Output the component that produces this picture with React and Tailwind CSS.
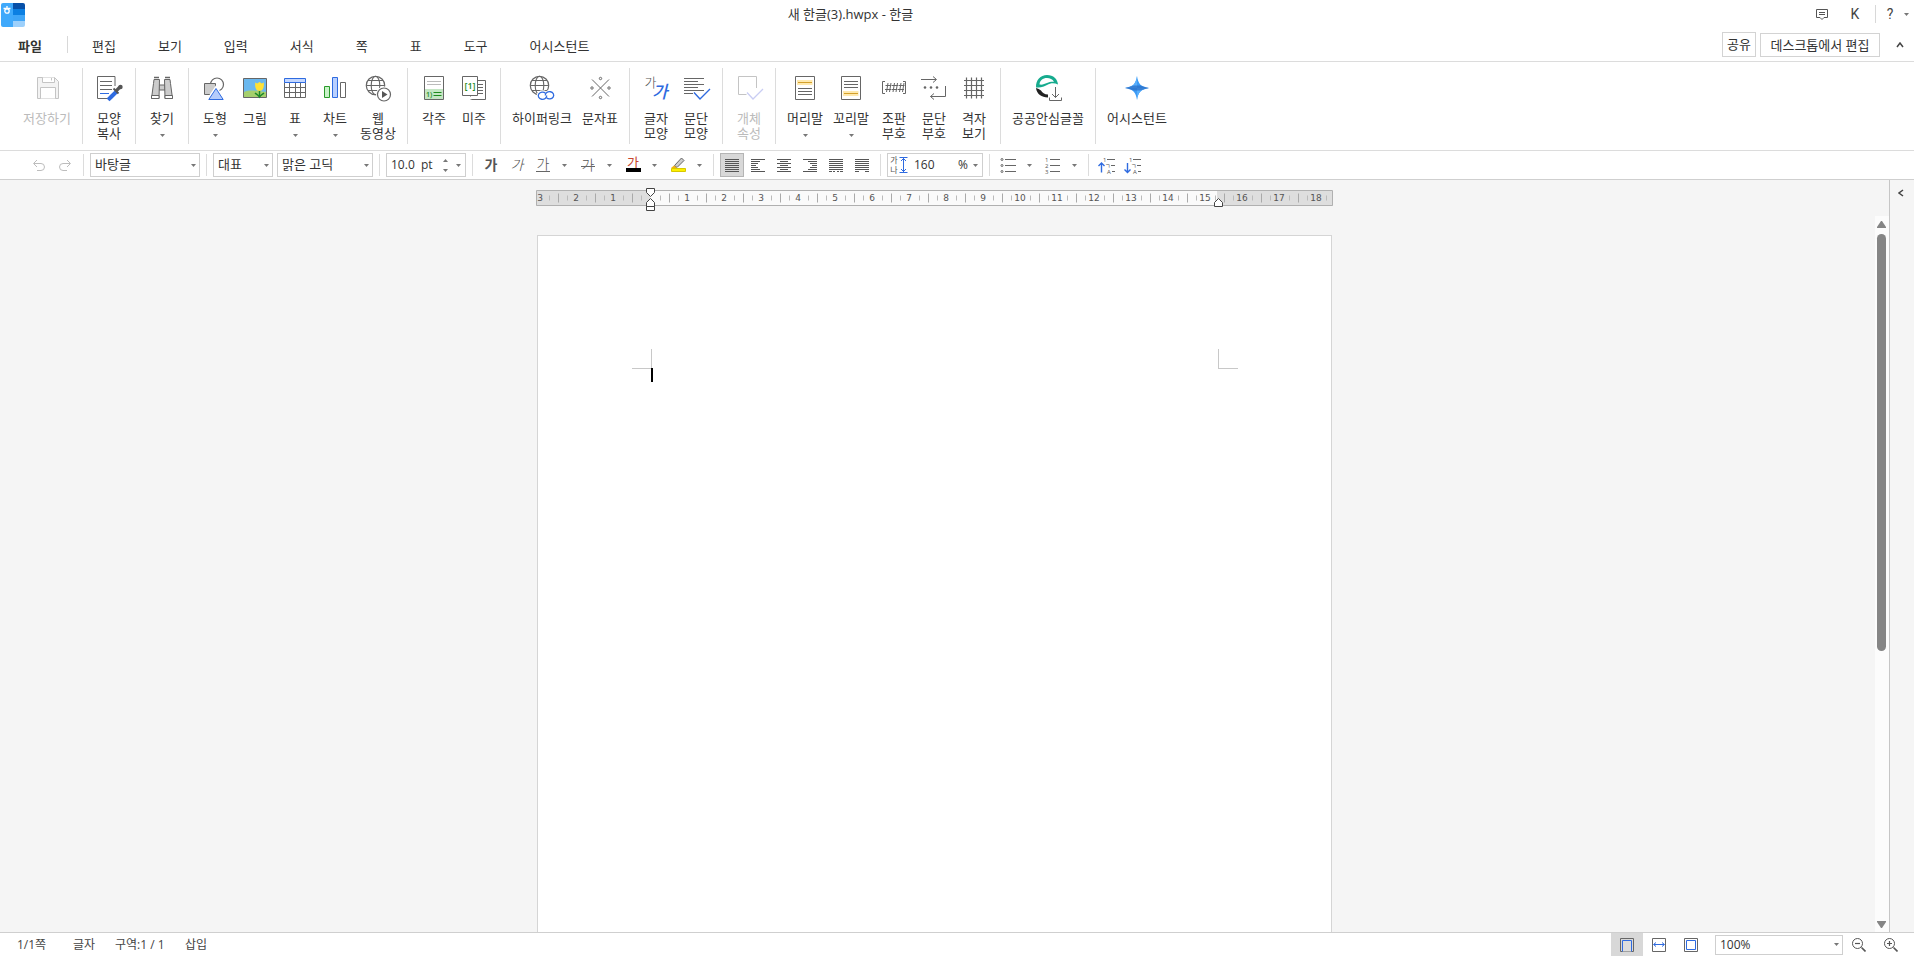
import React from "react";

const G = "#666";
const B = "#2f6be0";

function Icon({ children, size = "size-8" }) {
  return (
    <svg
      className={`${size} shrink-0 overflow-visible`}
      viewBox={size === "size-8" ? "0 0 32 32" : "0 0 24 24"}
      fill="none"
      stroke={G}
      aria-hidden="true"
    >
      {children}
    </svg>
  );
}

function Caret({ className = "" }) {
  return (
    <svg className={`h-[3px] w-[5px] shrink-0 ${className}`} viewBox="0 0 5 3" fill="#777" aria-hidden="true">
      <path d="M0 0h5L2.500 3z" />
    </svg>
  );
}

const Globe = () => (
  <>
    <circle cx="13.5" cy="13.5" r="9.2" strokeWidth="1.2" />
    <ellipse cx="13.5" cy="13.5" rx="4.3" ry="9.2" strokeWidth="1.1" />
    <path d="M4.500 13.500h18M6 8.500h15M6 18.500h15" strokeWidth="1.1" />
  </>
);

const icons = {
  save: (
    <Icon>
      <g stroke="#c4c4c4">
        <path d="M6.500 5.500h17l4 4v17h-21z" fill="#f3f3f3" />
        <path d="M11.500 5.500v5h12v-5" fill="#fff" />
        <path d="M20.500 6v2.500" />
        <path d="M9.500 26.500v-11h15v11" fill="#fff" />
      </g>
    </Icon>
  ),
  brush: (
    <Icon>
      <path d="M14 26.500H4.500v-22h17.500V14" fill="#fff" />
      <path d="M7 9.500h12M7 13.500h12M7 17.500h12" />
      <path d="M7 21.500h9" stroke={B} />
      <path d="M22.500 20.500L18 25L16.500 26.500" stroke={B} strokeWidth="4" strokeLinecap="square" />
      <path d="M20.500 16.500l5 5" strokeWidth="1.800" stroke="#555" />
      <path d="M23 19l4-4" strokeWidth="3.200" stroke="#555" />
      <circle cx="27.500" cy="15" r="2.200" fill="#555" stroke="none" />
    </Icon>
  ),
  find: (
    <Icon>
      <path d="M13 13h6v5h-6z" fill="#ccc" />
      <path d="M8 7.500h5.500l-.5 19H5.500l2-15z" fill="#ccc" />
      <path d="M24 7.500h-5.500l.5 19h7.500l-2-15z" fill="#ccc" />
      <path d="M5.500 23.500h7.500v3H5.500zM19 23.500h7.500v3H19z" fill="#fff" />
      <path d="M8 5.500h5M19 5.500h5" strokeWidth="1.500" />
    </Icon>
  ),
  shape: (
    <Icon>
      <circle cx="18" cy="12.500" r="6.500" strokeWidth="1.200" />
      <path d="M5.500 11.500h11v11h-11z" fill="#ccc" />
      <path d="M17 15L8 28.500h18z" fill="#fff" stroke="#fff" strokeWidth="2" />
      <path d="M17 16.500L9.800 27.500h14.400z" fill="#b5ccfb" stroke={B} />
    </Icon>
  ),
  picture: (
    <Icon>
      <path d="M4.500 6.500h23v19h-23z" fill="#6bb8ee" />
      <path d="M5 20c6-3 14-1 22 0v5H5z" fill="#a5cf6d" stroke="none" />
      <path d="M20.500 18v7" stroke="#1c8a2a" strokeWidth="1.400" />
      <path d="M16 21c1.500 1.500 3.500 2 4.500 4c1-2 3-2.500 4.500-4" stroke="#1c8a2a" strokeWidth="1.400" />
      <path d="M16.200 10.500l2 1l2.300-1.500l2.300 1.500l2-1c.5 5-1 8.500-4.300 8.500s-4.800-3.500-4.300-8.500z" fill="#ffe135" stroke="none" />
    </Icon>
  ),
  table: (
    <Icon>
      <path d="M5.500 10.500h21v15h-21z" fill="#fff" />
      <path d="M5 15.500h22M5 20.500h22M10.500 10v16M16.500 10v16M21.500 10v16" />
      <path d="M5.500 6.500h21v4h-21z" fill="#c3d7ff" stroke={B} />
    </Icon>
  ),
  chart: (
    <Icon>
      <path d="M5.500 14.500h5v11h-5z" fill="#c9f2c9" stroke="#2a9a2a" />
      <path d="M13.500 5.500h5v20h-5z" fill="#b9d0ff" stroke={B} />
      <path d="M21.500 10.500h5v15h-5z" fill="#fff" />
    </Icon>
  ),
  web: (
    <Icon>
      <Globe />
      <circle cx="22" cy="22.500" r="8" fill="#fff" stroke="none" />
      <circle cx="22" cy="22.500" r="6.500" fill="#fff" strokeWidth="1.200" />
      <path d="M20 19l5.500 3.500L20 26z" fill="#555" stroke="none" />
    </Icon>
  ),
  footnote: (
    <Icon>
      <path d="M6.500 4.500h19v23h-19z" fill="#fff" />
      <path d="M7 17h18v10H7z" fill="#c4e6c4" stroke="none" />
      <path d="M9 9.500h14M9 12.500h14" stroke="#bbb" />
      <text x="8" y="24.500" fontSize="7" fill="#1d8a1d" stroke="none" fontWeight="600">1)</text>
      <path d="M15.500 20.500h8M15.500 23.500h8" stroke="#1d8a1d" />
    </Icon>
  ),
  endnote: (
    <Icon>
      <path d="M12.500 8.500h15v19h-15z" fill="#fff" />
      <path d="M20 12.500h5M20 15.500h5M20 18.500h5M20 21.500h5" />
      <path d="M12.500 24.500v3" stroke="#fff" strokeWidth="2" />
      <path d="M4.500 4.500h15v19h-15z" fill="#fff" />
      <text x="12" y="17" fontSize="9" fill="#1d8a1d" stroke="none" fontWeight="600" textAnchor="middle">[1]</text>
    </Icon>
  ),
  link: (
    <Icon>
      <Globe />
      <g stroke="#fff" strokeWidth="3.500" fill="#fff">
        <ellipse cx="16.500" cy="23.500" rx="4.200" ry="3.600" />
        <ellipse cx="23.500" cy="23.500" rx="4.200" ry="3.600" />
      </g>
      <g stroke={B} strokeWidth="1.300">
        <path d="M19.500 21.200A4.200 3.600 0 1 0 20.700 23.500" />
        <path d="M20.500 25.800A4.200 3.600 0 1 0 19.300 23.500" />
      </g>
    </Icon>
  ),
  symbols: (
    <Icon>
      <path d="M8 7.500l17 17M25 7.500l-17 17" />
      <circle cx="16.500" cy="6.500" r="1.200" />
      <circle cx="16.500" cy="25.500" r="1.200" />
      <circle cx="8" cy="16" r="1.200" />
      <circle cx="25" cy="16" r="1.200" />
    </Icon>
  ),
  charShape: (
    <Icon>
      <text x="4.500" y="14.500" fontSize="13" fill="#555" stroke="none" fontWeight="300">가</text>
      <text x="12" y="26" fontSize="17" fill={B} stroke="none" fontWeight="500" fontStyle="italic">가</text>
    </Icon>
  ),
  paraShape: (
    <Icon>
      <path d="M4 6.500h20M4 9.500h14M4 12.500h20M4 15.500h14M4 18.500h20M4 21.500h9" />
      <path d="M14 20.500l6 6.500l10-10" stroke={B} strokeWidth="1.400" />
    </Icon>
  ),
  object: (
    <Icon>
      <path d="M23.500 16V4.500h-18v18h8" stroke="#c4c4c4" />
      <path d="M14 20.500l6 6.500l10-10" stroke="#c9cdf3" strokeWidth="1.300" />
    </Icon>
  ),
  header: (
    <Icon>
      <path d="M6.500 4.500h19v23h-19z" fill="#fff" />
      <path d="M8 8h15.500v5H8z" fill="#ffe9ae" stroke="none" />
      <path d="M9 10.500h14" stroke="#d3a02c" />
      <path d="M9 16.500h14M9 19.500h14M9 22.500h14" />
    </Icon>
  ),
  footer: (
    <Icon>
      <path d="M6.500 4.500h19v23h-19z" fill="#fff" />
      <path d="M8 19h15.500v5H8z" fill="#ffe9ae" stroke="none" />
      <path d="M9 21.500h14" stroke="#d3a02c" />
      <path d="M9 9.500h14M9 12.500h14M9 15.500h14" />
    </Icon>
  ),
  marks: (
    <Icon>
      <path d="M7 9.500H4.500v12H7M25 9.500h2.500v12H25" />
      <path d="M10 11l-1.500 9M13 11l-1.500 9M7.500 13.500h6M7 17.500h6M16.500 11L15 20M19.500 11L18 20M14 13.500h6M13.500 17.500h6M23 11l-1.500 9M26 11l-1.500 9M20.500 13.500h6M20 17.500h6" />
    </Icon>
  ),
  paraMarks: (
    <Icon>
      <path d="M3 7.500h15M15 4.500l3.500 3l-3.500 3" />
      <g fill={G} stroke="none">
        <circle cx="7" cy="15.500" r="1.300" />
        <circle cx="13" cy="15.500" r="1.300" />
        <circle cx="19" cy="15.500" r="1.300" />
      </g>
      <path d="M27.500 14v10.500H12.500M16 21.500l-3.500 3l3.500 3" />
    </Icon>
  ),
  grid: (
    <Icon>
      <path d="M8.500 5.500v21M13.500 5.500v21M18.500 5.500v21M23.500 5.500v21M6 8.500h20M6 13.500h20M6 18.500h20M6 23.500h20" strokeWidth="1.200" />
    </Icon>
  ),
  safeFont: (
    <Icon>
      <path d="M4 15.500C3.500 8 8.500 3 15 3c6.500 0 10.500 4 11 9.500c-4-2-7.500-1.500-11 .5c-4.500 2.500-8 2.500-11 2.500zM7.500 12.500c3 .5 5-.5 7.500-1.500c2-1 4.500-1.500 7-1.300C20.500 7.300 18 6 15 6c-4.300 0-7.200 2.600-7.500 6.500z" fill="#16ab8e" fillRule="evenodd" stroke="none" />
      <path d="M4 16c2 .8 3.500 1.200 5 2.500c1.200 2.300 3.500 4 7 4v3C9.500 25.500 4.800 22 4 16z" fill="#222" stroke="none" />
      <path d="M23.500 15v10.500M20 22l3.500 3.500L27 22M17.500 25.500v3h12v-3" />
    </Icon>
  ),
  assistant: (
    <Icon>
      <path d="M16 4c1.200 8 4 11 12 12c-8 1.200-10.800 4-12 12c-1.200-8-4-10.800-12-12c8-1 10.800-4 12-12z" fill="#3d9bf5" stroke="none" />
      <path d="M16 16h12c-8 1.200-10.800 4-12 12zM16 16H4c8-1 10.800-4 12-12z" fill="#57aefc" stroke="none" />
      <path d="M4 16l9-2.500h6L28 16l-9 2.500h-6z" fill="#2a6cc4" fillOpacity=".7" stroke="none" />
    </Icon>
  ),
};

const groups = [
  [{ i: "save", t: ["저장하기"], w: "w-[58px]", off: true }],
  [{ i: "brush", t: ["모양", "복사"], w: "w-10" }],
  [{ i: "find", t: ["찾기"], w: "w-10", c: true }],
  [
    { i: "shape", t: ["도형"], w: "w-10", c: true },
    { i: "picture", t: ["그림"], w: "w-10" },
    { i: "table", t: ["표"], w: "w-10", c: true },
    { i: "chart", t: ["차트"], w: "w-10", c: true },
    { i: "web", t: ["웹", "동영상"], w: "w-[46px]" },
  ],
  [
    { i: "footnote", t: ["각주"], w: "w-10" },
    { i: "endnote", t: ["미주"], w: "w-10" },
  ],
  [
    { i: "link", t: ["하이퍼링크"], w: "w-[70px]" },
    { i: "symbols", t: ["문자표"], w: "w-[46px]" },
  ],
  [
    { i: "charShape", t: ["글자", "모양"], w: "w-10" },
    { i: "paraShape", t: ["문단", "모양"], w: "w-10" },
  ],
  [{ i: "object", t: ["개체", "속성"], w: "w-10", off: true }],
  [
    { i: "header", t: ["머리말"], w: "w-[46px]", c: true },
    { i: "footer", t: ["꼬리말"], w: "w-[46px]", c: true },
    { i: "marks", t: ["조판", "부호"], w: "w-10" },
    { i: "paraMarks", t: ["문단", "부호"], w: "w-10" },
    { i: "grid", t: ["격자", "보기"], w: "w-10" },
  ],
  [{ i: "safeFont", t: ["공공안심글꼴"], w: "w-[82px]" }],
  [{ i: "assistant", t: ["어시스턴트"], w: "w-[70px]" }],
];

function RibbonButton({ item }) {
  return (
    <button
      disabled={item.off}
      className={`flex h-full flex-col items-center pt-1 leading-[15px] ${item.w} ${item.off ? "text-[#bbb]" : ""}`}
    >
      {icons[item.i]}
      <span className="mt-[7px] whitespace-nowrap">
        {item.t.map((line) => (
          <span key={line} className="block">{line}</span>
        ))}
      </span>
      {item.c && <Caret className="mt-2" />}
    </button>
  );
}

const tabs = ["편집", "보기", "입력", "서식", "쪽", "표", "도구", "어시스턴트"];

function Header() {
  return (
    <header className="border-b border-[#dcdcdc]">
      <div className="grid h-7 grid-cols-[1fr_auto_1fr] items-center">
        <svg className="mt-px ml-px size-6" viewBox="0 0 24 24" aria-label="한글">
          <clipPath id="logo"><rect width="24" height="24" rx="2" /></clipPath>
          <g clipPath="url(#logo)">
            <path d="M0 0h12v24H0z" fill="#3fa9fb" />
            <path d="M12 0h12v6H12z" fill="#0750a8" />
            <path d="M12 6h12v6H12z" fill="#0b7fe2" />
            <path d="M12 12h12v6H12z" fill="#3fa5f7" />
            <path d="M12 18h12v6H12z" fill="#9dd0fb" />
          </g>
          <path d="M6 3v2M2.500 5.500h7" stroke="#fff" strokeWidth="1.300" />
          <circle cx="6" cy="8" r="2.200" stroke="#fff" strokeWidth="1.300" fill="none" />
        </svg>
        <h1 className="mr-[213px] pb-px text-[13px] leading-4">새 한글(3).hwpx - 한글</h1>
        <div className="flex h-full items-center justify-end pr-[5px] text-sm">
          <button aria-label="의견" className="mr-[18px]">
            <svg className="size-[14px]" viewBox="0 0 14 14" fill="none" stroke="#555" aria-hidden="true">
              <path d="M1.500 2.500h11v8H9l-2 2l-2-2H1.500zM4 5.500h6M4 7.500h6" />
            </svg>
          </button>
          <button className="w-4 font-['Roboto'] text-[#444]">K</button>
          <span className="ml-3 h-[18px] w-px bg-[#d8d8d8]" />
          <button aria-label="도움말" className="ml-2 flex w-[25px] items-center justify-between font-['Roboto'] text-[#444]">
            <span className="w-3">?</span>
            <Caret />
          </button>
        </div>
      </div>
      <div className="flex h-[33px] items-center text-[13px]">
        <button className="w-[50px] pt-1 pl-[10px] font-semibold">파일</button>
        <span className="ml-[17px] h-[17px] w-px bg-[#d8d8d8]" />
        <nav className="ml-[3px] flex pt-1">
          {tabs.map((t) => (
            <button key={t} className="px-[21px]">{t}</button>
          ))}
        </nav>
        <div className="ml-auto flex items-end gap-1 pr-[6px]">
          <button className="h-[25px] w-[34px] border border-[#d3d3d3]">공유</button>
          <button className="h-6 w-[120px] border border-[#d3d3d3] leading-5">데스크톱에서 편집</button>
          <button aria-label="리본 접기" className="ml-2 flex h-5 w-4 justify-center">
            <svg className="mt-[5px] h-[6px] w-2" viewBox="0 0 8 6" fill="none" stroke="#444" strokeWidth="1.500" aria-hidden="true">
              <path d="M1 5l3-4l3 4" />
            </svg>
          </button>
        </div>
      </div>
    </header>
  );
}

function Ribbon() {
  return (
    <div className="flex h-[89px] border-b border-[#dcdcdc] py-[6px] pl-3 text-[13px]">
      {groups.map((g, n) => (
        <div key={n} className={`flex px-[6px] ${n < groups.length - 1 ? "border-r border-[#dcdcdc]" : ""}`}>
          {g.map((item) => (
            <RibbonButton key={item.i} item={item} />
          ))}
        </div>
      ))}
    </div>
  );
}

function Sep({ tight }) {
  return <span className={`h-[22px] w-px shrink-0 bg-[#dcdcdc] mr-[6px] ${tight ? "ml-[2px]" : "ml-[6px]"}`} />;
}

function Select({ label, value, options, className }) {
  return (
    <span className={`relative flex items-center ${className}`}>
      <select
        aria-label={label}
        defaultValue={value}
        className="h-full w-full appearance-none border border-[#cfcfcf] bg-white pl-1 outline-none"
      >
        {options.map((o) => (
          <option key={o}>{o}</option>
        ))}
      </select>
      <Caret className="pointer-events-none absolute right-1" />
    </span>
  );
}

function Tool({ label, children, active, off }) {
  return (
    <button
      aria-label={label}
      aria-pressed={active}
      disabled={off}
      className={`flex size-6 shrink-0 items-center justify-center ${active ? "border border-[#b5b5b5] bg-[#d8d8d8]" : ""}`}
    >
      {children}
    </button>
  );
}

function MenuCaret({ label }) {
  return (
    <button aria-label={`${label} 목록`} className="flex h-6 w-[21px] shrink-0 items-center justify-center pr-[2px]">
      <Caret />
    </button>
  );
}

const aligns = [
  ["양쪽 정렬", "M5 6.500h14M5 8.500h14M5 10.500h14M5 12.500h14M5 14.500h14M5 16.500h14M5 18.500h14"],
  ["왼쪽 정렬", "M5 6.500h14M5 8.500h9M5 10.500h7M5 12.500h5M5 14.500h7M5 16.500h9M5 18.500h14"],
  ["가운데 정렬", "M5 6.500h14M8 8.500h8M5 10.500h14M8 12.500h8M5 14.500h14M8 16.500h8M5 18.500h14"],
  ["오른쪽 정렬", "M5 6.500h14M10 8.500h9M12 10.500h7M14 12.500h5M12 14.500h7M10 16.500h9M5 18.500h14"],
  ["배분 정렬", "M5 6.500h14M5 8.500h14M5 10.500h14M5 12.500h14M5 14.500h14M5 16.500h14M5 18.500h3M9 18.500h2M13 18.500h2M16 18.500h3"],
  ["나눔 정렬", "M5 6.500h14M5 8.500h14M5 10.500h14M5 12.500h14M5 14.500h14M5 16.500h14M5 18.500h4M15 18.500h4"],
];

const letter = { fontSize: 14, stroke: "none", fill: "#555", textAnchor: "middle" };

function Toolbar() {
  return (
    <div className="flex h-[29px] items-center border-b border-[#cfcfcf] pl-[27px] text-[13px]">
      <div className="flex gap-[2px]">
        <Tool label="되돌리기" off>
          <Icon size="size-6"><path d="M10 7L6.500 10.500L10 14M7 10.500h7a3.500 3.500 0 0 1 0 7H10" stroke="#bdbdbd" /></Icon>
        </Tool>
        <Tool label="다시 실행" off>
          <Icon size="size-6"><path d="M14 7l3.500 3.500L14 14M17 10.500h-7a3.500 3.500 0 0 0 0 7h4" stroke="#bdbdbd" /></Icon>
        </Tool>
      </div>
      <Sep />
      <Select label="스타일" value="바탕글" options={["바탕글", "본문"]} className="h-6 w-[110px]" />
      <Sep />
      <div className="flex gap-1">
        <Select label="언어" value="대표" options={["대표", "한글", "영문"]} className="h-6 w-[60px]" />
        <Select label="글꼴" value="맑은 고딕" options={["맑은 고딕", "함초롬바탕"]} className="h-6 w-24" />
      </div>
      <Sep />
      <div className="flex h-6 w-20 items-center border border-[#cfcfcf] pr-1 pl-1 text-xs">
        <input id="size" aria-label="글자 크기" defaultValue="10.0" className="w-[30px] outline-none" />
        <label htmlFor="size" className="w-[14px]">pt</label>
        <span className="ml-auto flex flex-col gap-[7px]">
          <button aria-label="크게" className="h-[3px]"><Caret className="block rotate-180" /></button>
          <button aria-label="작게" className="h-[3px]"><Caret className="block" /></button>
        </span>
        <button aria-label="글자 크기 목록" className="ml-2 h-[3px]"><Caret className="block" /></button>
      </div>
      <Sep />
      <Tool label="진하게">
        <Icon size="size-6"><text x="12" y="17" {...letter} fontWeight="600">가</text></Icon>
      </Tool>
      <span className="w-[2px]" />
      <Tool label="기울임">
        <Icon size="size-6"><text x="12" y="17" {...letter} fontStyle="italic" fontWeight="300">가</text></Icon>
      </Tool>
      <span className="w-[2px]" />
      <Tool label="밑줄">
        <Icon size="size-6"><text x="12" y="16" {...letter} fontWeight="300">가</text><path d="M5 18.500h14" /></Icon>
      </Tool>
      <MenuCaret label="밑줄" />
      <Tool label="취소선">
        <Icon size="size-6"><text x="12" y="17" {...letter} fontWeight="300">가</text><path d="M5 13.500h14" /></Icon>
      </Tool>
      <MenuCaret label="취소선" />
      <Tool label="글자 색">
        <Icon size="size-6">
          <text x="12" y="14" {...letter} fontSize="13" fill="#c8452e">가</text>
          <path d="M5 15h15v4H5z" fill="#000" stroke="none" />
        </Icon>
      </Tool>
      <MenuCaret label="글자 색" />
      <Tool label="형광펜">
        <Icon size="size-6">
          <path d="M8.500 12.500L15.500 5l2.500 2.500l-7 7z" fill="#ccc" />
          <path d="M8 12.500l3 2.500H5z" fill="#f0b010" stroke="none" />
          <path d="M5.500 15.500h14v3h-14z" fill="#fdf000" stroke="#d8c800" />
        </Icon>
      </Tool>
      <MenuCaret label="형광펜" />
      <Sep tight />
      <div className="flex gap-[2px]">
        {aligns.map(([label, d], n) => (
          <Tool key={label} label={label} active={n === 0}>
            <Icon size="size-6"><path d={d} stroke="#555" /></Icon>
          </Tool>
        ))}
      </div>
      <Sep />
      <div className="flex h-6 w-24 items-center border border-[#cfcfcf] pr-1 text-xs">
        <Icon size="size-6">
          <text x="6" y="10" fontSize="8" fill="#555" stroke="none" textAnchor="middle">가</text>
          <text x="6" y="20" fontSize="8" fill="#555" stroke="none" textAnchor="middle">나</text>
          <path d="M11.500 4.500h8M11.500 19.500h8M15.500 5v14M13 8l2.500-2.500L18 8M13 16l2.500 2.500L18 16" stroke={B} />
        </Icon>
        <input id="spacing" aria-label="줄 간격" defaultValue="160" className="ml-[2px] w-8 outline-none" />
        <label htmlFor="spacing" className="ml-auto">%</label>
        <button aria-label="줄 간격 목록" className="ml-[5px] h-[3px]"><Caret className="block" /></button>
      </div>
      <Sep />
      <Tool label="글머리표">
        <Icon size="size-6">
          <path d="M9 6.500h11M9 12.500h11M9 18.500h11" />
          <circle cx="6" cy="6.500" r="1" /><circle cx="6" cy="12.500" r="1" /><circle cx="6" cy="18.500" r="1" />
        </Icon>
      </Tool>
      <MenuCaret label="글머리표" />
      <Tool label="문단 번호">
        <Icon size="size-6">
          <path d="M9 6.500h10M9 12.500h10M9 18.500h10" />
          <g fontSize="6" fill="#555" stroke="none"><text x="4" y="8.500">1</text><text x="4" y="14.500">2</text><text x="4" y="20.500">3</text></g>
        </Icon>
      </Tool>
      <MenuCaret label="문단 번호" />
      <Sep tight />
      <div className="flex gap-[2px]">
        {[
          ["한 수준 증가", "M6.500 19.500V10M3.500 13l3-3l3 3"],
          ["한 수준 감소", "M6.500 10v9.500M3.500 16.500l3 3l3-3"],
        ].map(([label, d]) => (
          <Tool key={label} label={label}>
            <Icon size="size-6">
              <path d={d} stroke={B} strokeWidth="1.400" />
              <path d="M12 6.500h8M16 12.500h4M17 18.500h3" />
              <g fontSize="6" fill="#555" stroke="none"><text x="8" y="8.500">1</text><text x="10" y="14.500">ㄱ</text><text x="12" y="20.500">A</text></g>
            </Icon>
          </Tool>
        ))}
      </div>
    </div>
  );
}

const UNIT = 37;
const ZERO = 114;
const cms = Array.from({ length: 22 }, (_, n) => n - 3);

function Ruler() {
  return (
    <svg className="h-[26px] w-[797px] shrink-0 overflow-visible" viewBox="0 0 797 26" aria-label="눈금자">
      <path d="M.5 3.500h796v15H.5z" fill="#fafafa" />
      <path d="M0 4h114v15H0zM681 4h116v15H681z" fill="#dedede" />
      {cms.map((n) => {
        const x = ZERO + n * UNIT;
        return (
          <g key={n}>
            {n !== 0 && (
              <text x={n === -3 ? x + 1 : x} y="14" fontSize="9" fill="#555" textAnchor="middle" fontFamily="DejaVu Sans">{Math.abs(n)}</text>
            )}
            <path d={`M${x + 10.5} 8.500v5`} stroke="#bbb" />
            {n > -3 && <path d={`M${x - 8.5} 8.500v5`} stroke="#bbb" />}
            {n < 18 && <path d={`M${x + 19.5} 6.500v9`} stroke="#aaa" />}
          </g>
        );
      })}
      <path d="M.5 3.500h796v15H.5z" fill="none" stroke="#b0b0b0" />
      <g fill="#fff" stroke="#444">
        <path d="M110.500 1.500h8v4l-4 4l-4-4z" />
        <path d="M110.500 19.500v-4l4-4l4 4v4zM110.500 19.500h8v4h-8z" />
        <path d="M678.500 19.500v-4l4-4l4 4v4z" />
      </g>
    </svg>
  );
}

function Workspace() {
  return (
    <main className="flex min-h-0 flex-1 bg-[#f5f5f5]">
      <div className="flex min-w-0 flex-1 flex-col items-center overflow-hidden pt-[7px] pr-[6px]">
        <Ruler />
        <article aria-label="문서" className="mx-px mt-[22px] flex w-[795px] flex-1 items-start justify-between border border-b-0 border-[#d5d5d5] bg-white pt-[113px] pr-[93px] pl-[94px]">
          <div className="flex flex-col items-end">
            <span className="h-5 w-5 border-r border-b border-[#c8c8c8]" />
            <span className="-mt-px -mr-px h-[14px] w-[2px] bg-black" />
          </div>
          <span className="h-5 w-5 border-b border-l border-[#c8c8c8]" />
        </article>
      </div>
      <div className="mt-9 flex w-[14px] flex-col items-center bg-[#fcfcfc] pt-[5px] pr-px pb-1">
        <button aria-label="위로">
          <svg className="mb-[6px] h-[7px] w-[9px]" viewBox="0 0 9 7" fill="#858585" aria-hidden="true"><path d="M4 0h1l4 6v1H0V6z" /></svg>
        </button>
        <span className="block h-[59%] w-[9px] rounded-full bg-[#858585]" />
        <button aria-label="아래로" className="mt-auto">
          <svg className="h-[7px] w-[9px]" viewBox="0 0 9 7" fill="#858585" aria-hidden="true"><path d="M0 0h9v1L5 7H4L0 1z" /></svg>
        </button>
      </div>
      <aside className="flex w-[25px] justify-center border-l border-[#c6c6c6] pt-[9px] pr-[3px]">
        <button aria-label="작업 창 펼치기" className="h-2">
          <svg className="h-2 w-[6px]" viewBox="0 0 6 8" fill="none" stroke="#444" strokeWidth="1.500" aria-hidden="true"><path d="M5 1L1 4l4 3" /></svg>
        </button>
      </aside>
    </main>
  );
}

function StatusBar() {
  return (
    <footer className="flex h-6 shrink-0 items-center border-t border-[#cfcfcf] pl-[17px] text-xs">
      <div className="flex text-[#444]">
        <span className="w-14">1/1쪽</span>
        <span className="w-[42px]">글자</span>
        <span className="w-[70px]">구역:1 / 1</span>
        <span>삽입</span>
      </div>
      <div className="ml-auto flex h-full items-center pr-[7px]">
        <button aria-label="쪽 맞춤" className="flex h-full w-8 items-center justify-center bg-[#d8d8d8]">
          <svg className="size-[14px]" viewBox="0 0 14 14" fill="none" aria-hidden="true">
            <path d="M.5.500h13v13H.5z" stroke="#666" /><path d="M2.500 13.500v-11h9v11" stroke={B} fill="#ddd" />
          </svg>
        </button>
        <button aria-label="폭 맞춤" className="flex h-full w-8 items-center justify-center">
          <svg className="size-[14px]" viewBox="0 0 14 14" fill="none" aria-hidden="true">
            <path d="M.5.500h13v13H.5z" stroke="#666" /><path d="M2 6.500h10M4 4.500l-2.500 2L4 8.500M10 4.500l2.500 2l-2.500 2" stroke={B} />
          </svg>
        </button>
        <button aria-label="쪽 전체" className="flex h-full w-8 items-center justify-center">
          <svg className="size-[14px]" viewBox="0 0 14 14" fill="none" aria-hidden="true">
            <path d="M.5.500h13v13H.5z" stroke="#666" /><path d="M2.500 2.500h9v9h-9z" stroke={B} />
          </svg>
        </button>
        <Select label="배율" value="100%" options={["50%", "100%", "200%"]} className="ml-2 h-5 w-32" />
        {[
          ["축소", "M3 5.500h5"],
          ["확대", "M5.500 3v5M3 5.500h5"],
        ].map(([label, d]) => (
          <button key={label} aria-label={label} className="flex h-full w-8 items-center justify-center">
            <svg className="size-[14px]" viewBox="0 0 14 14" fill="none" stroke="#555" aria-hidden="true">
              <circle cx="5.500" cy="5.500" r="5" />
              <path d={d} strokeWidth="1.200" />
              <path d="M9.500 9.500l4 4" strokeWidth="1.600" />
            </svg>
          </button>
        ))}
      </div>
    </footer>
  );
}

export default function App() {
  return (
    <div className="flex h-screen flex-col overflow-hidden bg-white font-['Open_Sans','Noto_Sans_CJK_KR',sans-serif] text-[#333]">
      <Header />
      <Ribbon />
      <Toolbar />
      <Workspace />
      <StatusBar />
    </div>
  );
}
